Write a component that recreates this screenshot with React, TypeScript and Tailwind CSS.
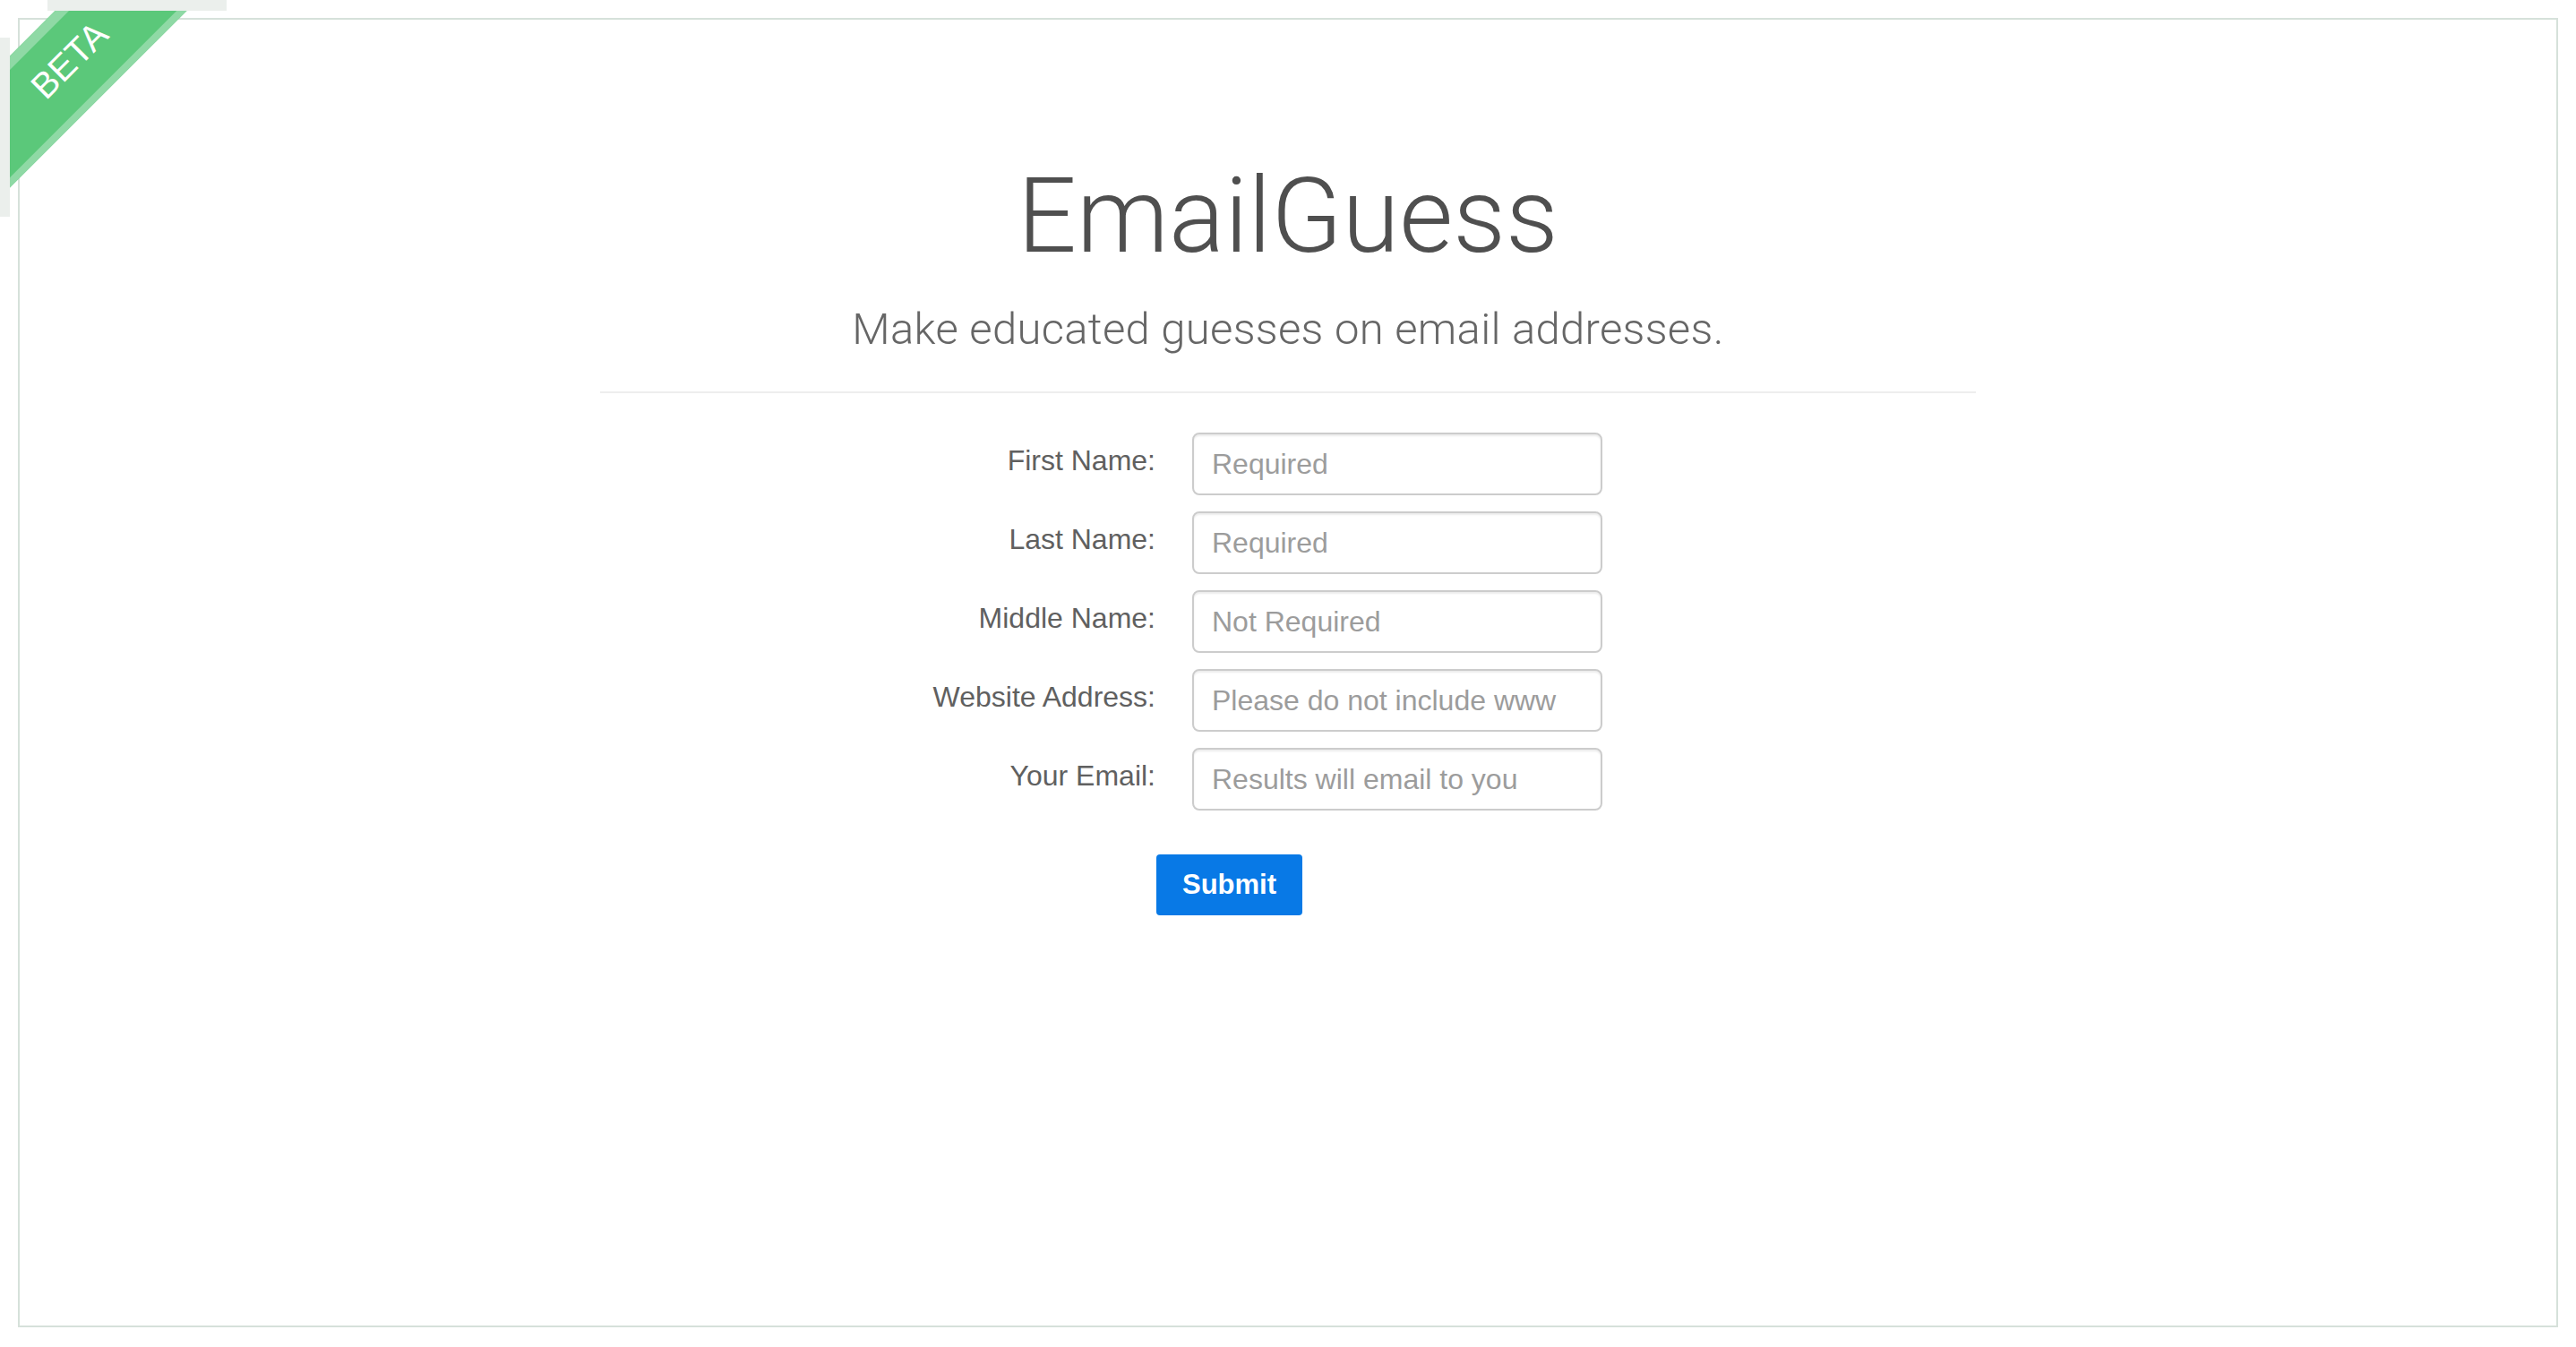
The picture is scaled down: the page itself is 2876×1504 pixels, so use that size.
import React from "react";

const fields = [
  { label: "First Name:", placeholder: "Required" },
  { label: "Last Name:", placeholder: "Required" },
  { label: "Middle Name:", placeholder: "Not Required" },
  { label: "Website Address:", placeholder: "Please do not include www" },
  { label: "Your Email:", placeholder: "Results will email to you" },
];

function Ribbon() {
  return (
    <>
      <div className="absolute left-[53px] top-0 h-[12px] w-[200px] bg-[#ebefec]" />
      <div className="absolute left-0 top-[42px] h-[200px] w-[11px] bg-[#ebefec]" />
      <div className="absolute left-[11px] top-[12px] h-[240px] w-[240px] overflow-hidden">
        <div className="absolute left-[-138px] top-[10px] flex h-[104px] w-[400px] -rotate-45 items-center justify-center border-t-[11px] border-b-[8px] border-t-[#8fd9a5] border-b-[#8fd9a5] bg-[#5bc87a]">
          <span className="translate-x-[8px] translate-y-[-4px] font-['Liberation_Sans',sans-serif] text-[40px] leading-none text-white">
            BETA
          </span>
        </div>
      </div>
    </>
  );
}

export default function App() {
  return (
    <div className="relative h-[1504px] w-[2876px] bg-white p-[20px]">
      <div className="flex h-[1462px] w-[2836px] flex-col items-center border-2 border-[#d6e1da] bg-white">
        <h1 className="mt-[161px] font-['Roboto',sans-serif] text-[116px] font-light leading-none text-[#4f4f4f]">
          EmailGuess
        </h1>
        <p className="mt-[44px] font-['Roboto',sans-serif] text-[49px] font-light leading-none tracking-[0.3px] text-[#666666]">
          Make educated guesses on email addresses.
        </p>
        <div className="mt-[45px] h-[2px] w-[1536px] bg-[#eeeeee]" />
        <form className="mt-[44px] flex w-[1536px] flex-col gap-[18px] font-['Liberation_Sans',Arial,sans-serif]">
          {fields.map((f) => (
            <div key={f.label} className="flex items-start">
              <label className="w-[620px] pt-[15px] text-right text-[32px] leading-none text-[#606060]">
                {f.label}
              </label>
              <input
                type="text"
                placeholder={f.placeholder}
                className="ml-[41px] h-[70px] w-[458px] rounded-[8px] border-2 border-[#cccccc] bg-white px-[20px] text-[32px] text-[#555] shadow-[inset_0_2px_2px_rgba(0,0,0,0.075)] outline-none placeholder:text-[#9c9c9c]"
              />
            </div>
          ))}
          <div className="mt-[31px] pl-[621px]">
            <button
              type="button"
              className="flex h-[68px] w-[163px] items-center justify-center rounded-[4px] bg-[#0879e6] text-[31px] font-bold text-white"
            >
              Submit
            </button>
          </div>
        </form>
      </div>
      <Ribbon />
    </div>
  );
}
